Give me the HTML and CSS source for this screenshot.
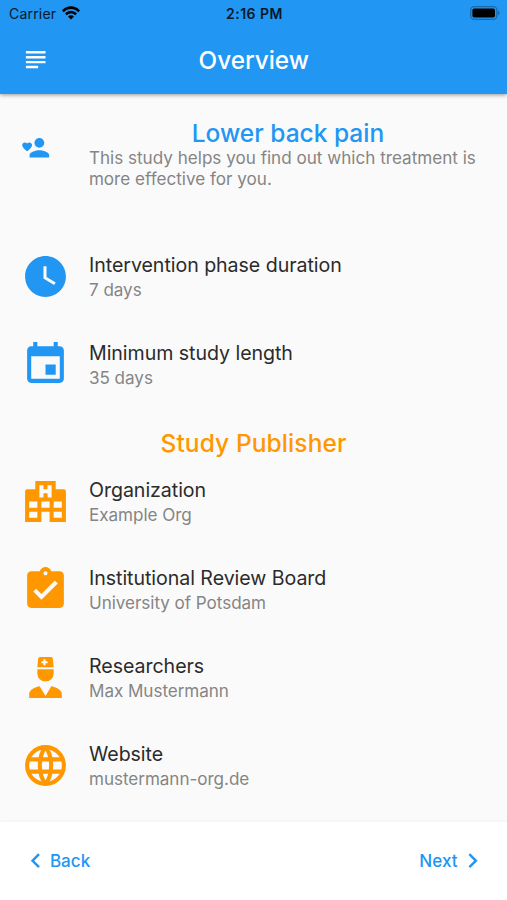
FILE: index.html
```html
<!DOCTYPE html>
<html lang="en">
<head>
    <meta charset="UTF-8">
    <meta name="viewport" content="width=device-width, initial-scale=1.0">
    <title>Overview</title>
    <link rel="stylesheet" href="styles.css">
</head>
<body>

    <!-- Status bar and app bar -->
    <header>
        <div class="status-bar">
            <div class="carrier">
                <span>Carrier</span>
                <svg class="wifi" viewBox="0 0 18 14">
                    <path d="M0 4.400C5-1 13-1 18 4.400L16.200 6.200C12.200 2 5.800 2 1.800 6.200z"/>
                    <path d="M3 7.400C6.400 3.900 11.600 3.900 15 7.400L13.200 9.200C10.800 6.800 7.200 6.800 4.800 9.200z"/>
                    <path d="M6 10.400C7.700 8.800 10.300 8.800 12 10.400L9 13.500z"/>
                </svg>
            </div>
            <span class="time">2:16 PM</span>
            <svg class="battery" viewBox="0 0 30 14">
                <rect class="battery-case" x="0.700" y="0.700" width="26.200" height="12.600" rx="3.500"/>
                <rect x="2.400" y="2.400" width="22.600" height="9.200" rx="1.800"/>
                <path class="battery-cap" d="M28 4.800c2 .6 2 3.800 0 4.400z"/>
            </svg>
        </div>
        <div class="app-bar">
            <svg class="icon-small" viewBox="0 0 24 24"><path d="M14 17H4v2h10v-2zm6-8H4v2h16V9zM4 15h16v-2H4v2zM4 5v2h16V5H4z"/></svg>
            <h1>Overview</h1>
        </div>
    </header>

    <!-- Study details -->
    <main>
        <div class="row intro">
            <svg class="icon-small" viewBox="0 0 24 24">
                <path d="M15 12c2.210 0 4-1.790 4-4s-1.790-4-4-4-4 1.790-4 4 1.790 4 4 4zm0 2c-2.670 0-8 1.340-8 4v2h16v-2c0-2.660-5.330-4-8-4z"/>
                <path d="M5 15l-.6-.5C2.300 12.600 1 11.400 1 9.800 1 8.600 2 7.700 3.200 7.700c.7 0 1.400.3 1.800.8.4-.5 1.100-.8 1.800-.8C8 7.700 9 8.600 9 9.800c0 1.600-1.300 2.800-3.400 4.700z"/>
            </svg>
            <div class="text">
                <h2>Lower back pain</h2>
                <p>This study helps you find out which treatment is more effective for you.</p>
            </div>
        </div>

        <div class="row">
            <svg class="icon" viewBox="0 0 24 24"><path d="M12 2C6.500 2 2 6.500 2 12s4.500 10 10 10 10-4.500 10-10S17.500 2 12 2zm4.200 14.200L11 13V7h1.500v5.200l4.500 2.700-.8 1.300z"/></svg>
            <div class="text">
                <h3>Intervention phase duration</h3>
                <p>7 days</p>
            </div>
        </div>
        <div class="row">
            <svg class="icon" viewBox="0 0 24 24"><path d="M17 12h-5v5h5v-5zM16 1v2H8V1H6v2H5c-1.110 0-1.990.9-1.990 2L3 19c0 1.100.89 2 2 2h14c1.100 0 2-.9 2-2V5c0-1.100-.9-2-2-2h-1V1h-2zm3 18H5V8h14v11z"/></svg>
            <div class="text">
                <h3>Minimum study length</h3>
                <p>35 days</p>
            </div>
        </div>

        <h2 class="publisher-title">Study Publisher</h2>

        <section class="publisher">
            <div class="row">
                <svg class="icon" viewBox="0 0 24 24"><path d="M2 22V7A1 1 0 0 1 3 6H7V2H17V6H21A1 1 0 0 1 22 7V22H14V17H10V22H2M9 4V10H11V8H13V10H15V4H13V6H11V4H9M4 20H8V17H4V20M4 15H8V12H4V15M16 20H20V17H16V20M16 15H20V12H16V15M10 15H14V12H10V15Z" fill-rule="evenodd"/></svg>
                <div class="text">
                    <h3>Organization</h3>
                    <p>Example Org</p>
                </div>
            </div>
            <div class="row">
                <svg class="icon" viewBox="0 0 24 24"><path d="M19 3h-4.180C14.400 1.840 13.300 1 12 1c-1.300 0-2.400.84-2.820 2H5c-1.100 0-2 .9-2 2v14c0 1.100.9 2 2 2h14c1.100 0 2-.9 2-2V5c0-1.100-.9-2-2-2zm-7 0c.55 0 1 .45 1 1s-.45 1-1 1-1-.45-1-1 .45-1 1-1zm-2 14l-4-4 1.410-1.410L10 14.170l6.590-6.590L18 9l-8 8z" fill-rule="evenodd"/></svg>
                <div class="text">
                    <h3>Institutional Review Board</h3>
                    <p>University of Potsdam</p>
                </div>
            </div>
            <div class="row">
                <svg class="icon" viewBox="0 0 24 24"><path d="M14.840 16.260C17.860 16.830 20 18.290 20 20V22H4V20C4 18.290 6.140 16.830 9.160 16.260L12 21L14.840 16.260M8 8H16V10A4 4 0 0 1 12 14A4 4 0 0 1 8 10V8M8 7L8.410 2.900C8.460 2.390 8.890 2 9.410 2H14.600C15.110 2 15.540 2.390 15.590 2.900L16 7H8M12 3H11V4H10V5H11V6H12V5H13V4H12V3Z" fill-rule="evenodd"/></svg>
                <div class="text">
                    <h3>Researchers</h3>
                    <p>Max Mustermann</p>
                </div>
            </div>
            <div class="row">
                <svg class="icon" viewBox="0 0 24 24">
                    <g class="globe">
                        <circle cx="12" cy="12" r="9"/>
                        <path d="M12 3C8.300 7.500 8.300 16.500 12 21M12 3C15.700 7.500 15.700 16.500 12 21M4 9H20M4 15H20"/>
                    </g>
                </svg>
                <div class="text">
                    <h3>Website</h3>
                    <p>mustermann-org.de</p>
                </div>
            </div>
        </section>
    </main>

    <!-- Bottom navigation -->
    <footer>
        <button>
            <svg class="icon-small" viewBox="0 0 24 24"><path d="M15.410 7.410L14 6l-6 6 6 6 1.410-1.410L10.830 12z"/></svg>
            <span>Back</span>
        </button>
        <button>
            <span>Next</span>
            <svg class="icon-small" viewBox="0 0 24 24"><path d="M10 6L8.590 7.410 13.170 12l-4.580 4.590L10 18l6-6z"/></svg>
        </button>
    </footer>

</body>
</html>
```
FILE: styles.css
```css
/* Base styles */
* {
    box-sizing: border-box;
}

body {
    margin: 0;
    height: 900px;
    display: flex;
    flex-direction: column;
    overflow: hidden;
    background-color: #fafafa;
    color: #2196f3;
    font-family: Inter, sans-serif;
}

h1, h2, h3, p {
    margin: 0;
}

svg {
    display: block;
    flex: none;
    fill: currentColor;
}

.icon {
    width: 49px;
    height: 49px;
}

.icon-small {
    width: 29.4px;
    height: 29.4px;
}

/* Header */
header {
    height: 94px;
    flex: none;
    background-color: #2196f3;
    box-shadow: 0 1px 4px rgba(0, 0, 0, 0.4);
}

.status-bar {
    display: grid;
    grid-template-columns: 1fr auto 1fr;
    align-items: center;
    height: 26px;
    padding: 0 7px 0 9px;
    color: #06192b;
    font-size: 14px;
}

.carrier {
    display: flex;
    align-items: center;
    gap: 6px;
    letter-spacing: 0.2px;
}

.wifi {
    width: 18px;
    height: 14px;
    color: #000;
}

.time {
    font-weight: 600;
    letter-spacing: 0.5px;
}

.battery {
    width: 30px;
    height: 14px;
    justify-self: end;
    color: #000;
}

.battery-case {
    fill: none;
    stroke: #176aab;
    stroke-width: 1.3;
}

.battery-cap {
    fill: #176aab;
}

.app-bar {
    display: grid;
    grid-template-columns: 30px 1fr 30px;
    align-items: center;
    height: 67px;
    padding: 0 20px 0 20.5px;
    color: #fff;
}

.app-bar h1 {
    text-align: center;
    font-size: 24.3px;
    font-weight: 500;
}

/* Study rows */
main {
    flex: 1;
}

.row {
    display: flex;
    align-items: center;
    gap: 19.5px;
    height: 88px;
    padding: 0 20px 0 20.5px;
}

.text {
    flex: 1;
    padding-bottom: 1px;
}

h2 {
    font-size: 24.5px;
    font-weight: 500;
    line-height: 29px;
    text-align: center;
}

h3 {
    color: #2b2b2b;
    font-size: 19.6px;
    font-weight: 400;
    letter-spacing: -0.05px;
    line-height: 24px;
}

p {
    color: #858585;
    font-size: 17.1px;
    letter-spacing: -0.05px;
    line-height: 21px;
    margin-top: 2px;
}

.intro {
    align-items: flex-start;
    gap: 39px;
    height: 138.5px;
    padding-top: 25px;
}

.intro .icon-small {
    margin-top: 14px;
}

.intro p {
    margin-top: -1px;
    letter-spacing: 0;
}

/* Publisher section */
.publisher-title {
    height: 49px;
    padding-top: 20px;
    color: #ff9800;
    letter-spacing: 0.1px;
}

.publisher .icon {
    color: #ff9800;
}

.globe {
    fill: none;
    stroke: currentColor;
    stroke-width: 2;
}

/* Bottom navigation */
footer {
    display: flex;
    flex: none;
    justify-content: space-between;
    align-items: center;
    height: 78px;
    padding: 0 20px 0 20.5px;
    background-color: #fff;
    box-shadow: 0 0 4px rgba(0, 0, 0, 0.04);
}

footer button {
    display: flex;
    align-items: center;
    padding: 0;
    border: none;
    background: none;
    color: #2196f3;
    font-family: inherit;
    font-size: 17.1px;
    font-weight: 500;
    cursor: pointer;
}
```
